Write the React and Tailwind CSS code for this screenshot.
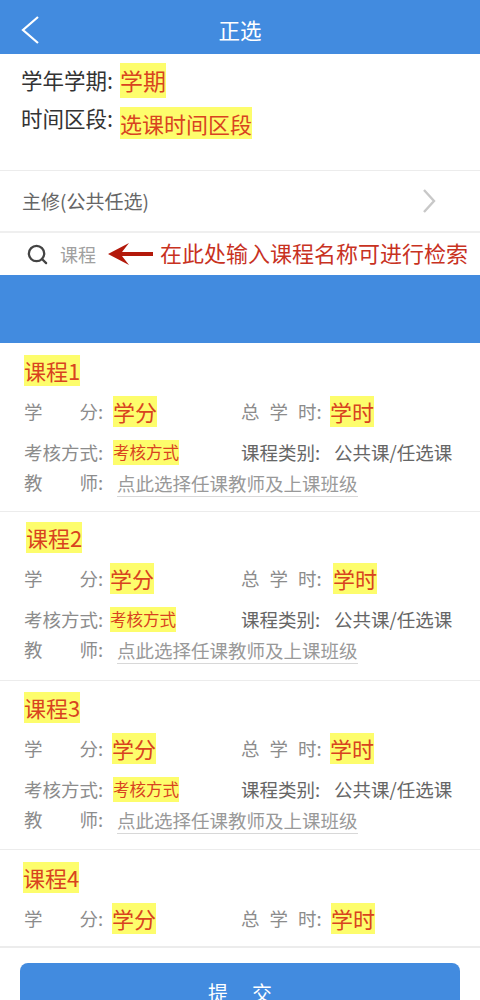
import { Search } from "lucide-react";

const courses = [
  { name: "课程1", box: "h-[169px] pt-3 border-b", titleMl: "ml-0", creditMl: "ml-0", hoursMl: "ml-[0px]", examMl: "ml-0" },
  { name: "课程2", box: "h-[169px] pt-[10px] border-b", titleMl: "ml-[2px]", creditMl: "ml-[-3px]", hoursMl: "ml-[3px]", examMl: "ml-[-3px]" },
  { name: "课程3", box: "h-[169px] pt-[11px] border-b", titleMl: "ml-0", creditMl: "ml-[-1px]", hoursMl: "ml-[0px]", examMl: "ml-0" },
  { name: "课程4", box: "h-[98px] pt-3 border-b-2", titleMl: "ml-[-1px]", creditMl: "ml-[-1px]", hoursMl: "ml-[1px]", short: true },
];

function Mark({ className, children }) {
  return <span className={`bg-[#fdfd6c] text-[#d8431f] inline-block whitespace-nowrap ${className}`}>{children}</span>;
}

function CourseCard({ course }) {
  return (
    <div className={`${course.box} border-[#ececec] px-6`}>
      <Mark className={`${course.titleMl} text-[22px] leading-[31px]`}>{course.name}</Mark>
      <div className="flex items-center h-[31px] mt-[10px]">
        <div className="w-[217px] flex items-center">
          <span className="w-[89px] flex text-[18.5px] text-[#8c8c8c]">
            <span>学</span>
            <span className="ml-[37px]">分:</span>
          </span>
          <Mark className={`${course.creditMl} text-[22px] leading-[31px]`}>学分</Mark>
        </div>
        <span className="w-[89px] flex text-[18.5px] text-[#8c8c8c]">
          <span>总</span>
          <span className="ml-[10px]">学</span>
          <span className="ml-[10px]">时:</span>
        </span>
        <Mark className={`${course.hoursMl} text-[22px] leading-[31px]`}>学时</Mark>
      </div>
      {!course.short && (
        <>
          <div className="flex items-center h-[25px] mt-[13px]">
            <div className="w-[217px] flex items-center">
              <span className="w-[89px] text-[18.5px] text-[#8c8c8c] whitespace-nowrap">考核方式:</span>
              <Mark className={`${course.examMl} text-[16.5px] leading-[25px]`}>考核方式</Mark>
            </div>
            <span className="w-[93px] text-[18.5px] text-[#666] whitespace-nowrap">课程类别:</span>
            <span className="text-[18.5px] text-[#666] whitespace-nowrap">公共课/任选课</span>
          </div>
          <div className="flex items-center h-[28px] mt-[4px]">
            <span className="w-[93px] flex text-[18.5px] text-[#8c8c8c]">
              <span>教</span>
              <span className="ml-[37px]">师:</span>
            </span>
            <span className="text-[18.5px] leading-[26px] text-[#999] border-b border-[#d8d8d8] whitespace-nowrap">点此选择任课教师及上课班级</span>
          </div>
        </>
      )}
    </div>
  );
}

export default function App() {
  return (
    <div className="h-[1000px] overflow-hidden bg-white font-['Noto_Sans_CJK_SC',sans-serif]">
      {/* Header */}
      <header className="h-[54px] bg-[#428bdf] relative flex items-center justify-center">
        <svg width="60" height="54" viewBox="0 0 60 54" className="absolute left-0 top-0">
          <path d="M38 17 L23 30 L38 43" fill="none" stroke="#fff" strokeWidth="2.2" />
        </svg>
        <span className="text-[21.5px] text-white mt-[6px]">正选</span>
      </header>

      {/* Term info */}
      <div className="h-[117px] px-[21px] pt-[9px] border-b border-[#ececec]">
        <div className="flex items-center h-[35px]">
          <span className="w-[99px] text-[21.5px] text-[#333] whitespace-nowrap">学年学期:</span>
          <Mark className="text-[23px] leading-[35px]">学期</Mark>
        </div>
        <div className="flex items-center h-[32px] mt-[9px]">
          <span className="w-[99px] text-[21.5px] text-[#333] whitespace-nowrap mb-[10px]">时间区段:</span>
          <Mark className="text-[22px] leading-[32px]">选课时间区段</Mark>
        </div>
      </div>

      {/* Category row */}
      <div className="h-[62px] pl-[22px] pr-[44px] flex items-center justify-between border-b-2 border-[#efefef]">
        <span className="text-[19px] text-[#666]">主修(公共任选)</span>
        <svg width="14" height="24" viewBox="0 0 14 24">
          <path d="M2 1 L12 12 L2 23" fill="none" stroke="#c8c8c8" strokeWidth="2.4" />
        </svg>
      </div>

      {/* Search row */}
      <div className="h-[42px] flex items-center pl-[26px]">
        <Search size={23} strokeWidth={2.4} className="text-[#444]" />
        <span className="ml-[11px] text-[18px] text-[#a0a0a0]">课程</span>
        <svg width="48" height="24" viewBox="0 0 48 24" className="ml-[11px] shrink-0">
          <path d="M1 12 L22 1 L15 10 H46 V14 H15 L22 23 Z" fill="#b3190b" />
        </svg>
        <span className="ml-[5px] text-[22px] text-[#c8321f] whitespace-nowrap mb-[4px]">在此处输入课程名称可进行检索</span>
      </div>

      {/* Blue band */}
      <div className="h-[68px] bg-[#428bdf]" />

      {/* Courses */}
      {courses.map((course) => (
        <CourseCard key={course.name} course={course} />
      ))}

      {/* Submit */}
      <div className="px-5 pt-[15px]">
        <button className="w-full h-[60px] bg-[#428bdf] rounded-lg text-white text-[20px] tracking-[24px] pl-[24px]">
          提交
        </button>
      </div>
    </div>
  );
}
